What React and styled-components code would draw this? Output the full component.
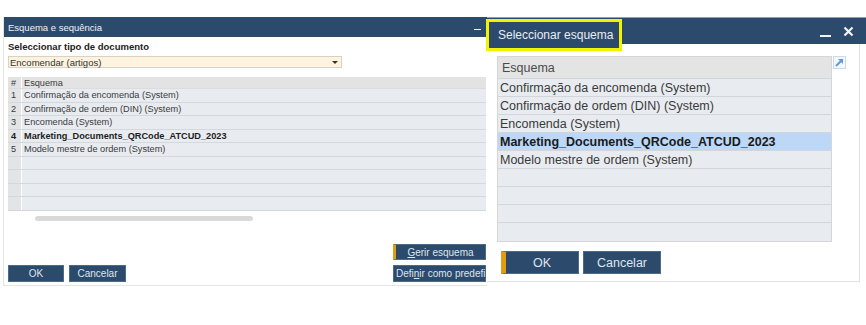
import React from 'react';
import styled, { createGlobalStyle } from 'styled-components';

const GlobalStyle = createGlobalStyle`
  html, body { margin: 0; padding: 0; background: #fff; }
  body { font-family: "Liberation Sans", Arial, sans-serif; color: #333; }
`;

const NAVY = '#2c4a6b';
const ORANGE = '#e39b12';
const NARROW = '"Liberation Sans Narrow", "Liberation Sans", Arial, sans-serif';

const Stage = styled.div`
  display: flex;
  align-items: flex-start;
  width: 866px;
  height: 325px;
  padding: 17px 0 0 3px;
  box-sizing: border-box;
  overflow: hidden;
`;

const MainWindow = styled.div`
  display: flex;
  flex-direction: column;
  width: 484px;
  height: 269px;
  box-sizing: border-box;
  background: #fff;
  border-left: 1px solid #e4e4e4;
  border-bottom: 1px solid #e4e4e4;
`;

const SmallTitle = styled.div`
  display: flex;
  align-items: center;
  justify-content: space-between;
  height: 20px;
  padding: 0 6px 0 4px;
  background: ${NAVY};
  color: #eef2f6;
  font-family: ${NARROW};
  font-size: 9.5px;
`;

const Minimize = styled.span`
  display: inline-block;
  width: ${p => p.$w}px;
  height: ${p => p.$t}px;
  background: #f2f5f8;
  margin-top: ${p => p.$top}px;
`;

const MainBody = styled.div`
  flex: 1;
  display: flex;
  flex-direction: column;
  padding: 3px 1px 3px 4px;
`;

const Label = styled.div`
  font-size: 9.5px;
  font-weight: bold;
  color: #222;
  height: 12px;
  line-height: 12px;
  margin-top: 1px;
`;

const Dropdown = styled.div`
  display: flex;
  align-items: center;
  justify-content: space-between;
  width: 334px;
  height: 12px;
  margin-top: 3px;
  box-sizing: border-box;
  padding: 0 3px 0 1px;
  background: #fdf3de;
  border: 1px solid #d8d2c2;
  font-family: ${NARROW};
  font-size: 9.5px;
  color: #333;
`;

const Caret = styled.span`
  width: 0;
  height: 0;
  border-left: 3px solid transparent;
  border-right: 3px solid transparent;
  border-top: 3px solid #333;
`;

const SmallGrid = styled.div`
  margin-top: 9px;
  display: flex;
  flex-direction: column;
`;

const SmallRow = styled.div`
  display: grid;
  grid-template-columns: 14px 1fr;
  height: ${p => (p.$head ? 12 : 13.5)}px;
  box-sizing: border-box;
  border-bottom: 1px solid ${p => (p.$head ? '#dcdcdc' : '#d3d8dd')};
  font-family: ${p => (p.$bold ? 'inherit' : NARROW)};
  font-size: 9.2px;
  font-weight: ${p => (p.$bold ? 'bold' : 'normal')};
  color: ${p => (p.$bold ? '#1e1e1e' : '#3a3a3a')};
`;

const IndexCell = styled.div`
  display: flex;
  align-items: center;
  padding-left: 3px;
  background: ${p => (p.$head ? '#e3e3e3' : '#e2e4e6')};
  border-right: 1px solid #fff;
`;

const DataCell = styled.div`
  display: flex;
  align-items: center;
  padding-left: 2px;
  background: ${p => (p.$head ? '#e3e3e3' : '#e8ecf0')};
  white-space: nowrap;
`;

const Scrollbar = styled.div`
  width: 218px;
  height: 5px;
  margin: 5px 0 0 27px;
  border-radius: 3px;
  background: #d9d9d9;
`;

const Footer = styled.div`
  margin-top: auto;
  display: flex;
  justify-content: space-between;
  align-items: flex-end;
`;

const ButtonGroup = styled.div`
  display: flex;
  flex-direction: ${p => (p.$column ? 'column' : 'row')};
  gap: ${p => p.$gap}px;
`;

const Button = styled.div`
  display: flex;
  align-items: center;
  justify-content: ${p => (p.$left ? 'flex-start' : 'center')};
  width: ${p => p.$w}px;
  height: ${p => p.$h}px;
  box-sizing: border-box;
  padding-left: ${p => (p.$left ? 2 : 0)}px;
  background: ${NAVY};
  border: 1px solid #4d6a8a;
  border-left: ${p => (p.$accent ? `${p.$accent}px solid ${ORANGE}` : '1px solid #4d6a8a')};
  color: #dfe6ee;
  font-family: ${p => (p.$narrow ? NARROW : 'inherit')};
  font-size: ${p => p.$fs}px;
  white-space: nowrap;
  overflow: hidden;
`;

const U = styled.span`
  text-decoration: underline;
`;

const DialogWindow = styled.div`
  display: flex;
  flex-direction: column;
  width: 379px;
  height: 265px;
  background: #fff;
`;

const BigTitle = styled.div`
  display: flex;
  align-items: flex-start;
  justify-content: space-between;
  height: 26px;
  background: ${NAVY};
  border-top: 1px solid #c99a3a;
`;

const Highlight = styled.div`
  position: relative;
  z-index: 1;
  display: flex;
  align-items: center;
  width: 136px;
  height: 32px;
  margin: 1px 0 0 -1px;
  box-sizing: border-box;
  padding-left: 9px;
  background: ${NAVY};
  border: 3px solid #f3f300;
  color: #e8edf2;
  font-size: 12px;
  white-space: nowrap;
`;

const Controls = styled.div`
  display: flex;
  align-items: center;
  gap: 12px;
  height: 26px;
  padding-right: 12px;
`;

const DialogBody = styled.div`
  flex: 1;
  display: flex;
  flex-direction: column;
  margin-right: 6px;
  padding: 12px 0 0 10px;
  border-right: 1px solid #e2e2e2;
  border-bottom: 1px solid #e2e2e2;
`;

const GridLine = styled.div`
  display: flex;
  align-items: flex-start;
  gap: 1px;
`;

const BigGrid = styled.div`
  width: 335px;
  display: flex;
  flex-direction: column;
  border: 1px solid #d6d6d6;
  box-sizing: border-box;
`;

const BigRow = styled.div`
  display: flex;
  align-items: center;
  height: ${p => (p.$head ? 22 : 18)}px;
  box-sizing: border-box;
  padding-left: ${p => (p.$head ? 4 : 2)}px;
  background: ${p => (p.$head ? '#e4e4e4' : p.$selected ? '#bcd8f6' : '#e8ecf0')};
  border-bottom: 1px solid #d2d6da;
  font-size: 12.5px;
  font-weight: ${p => (p.$bold ? 'bold' : 'normal')};
  color: ${p => (p.$bold ? '#1a1a1a' : p.$head ? '#4a4a4a' : '#3a3a3a')};
  white-space: nowrap;
  &:last-child { border-bottom: none; }
`;

const DialogButtons = styled(ButtonGroup)`
  margin: 9px 0 0 4px;
`;

const ExpandIcon = () => (
  <svg width="13" height="13" viewBox="0 0 13 13">
    <rect x="0.5" y="0.5" width="12" height="12" fill="#f4f8fc" stroke="#c9dbee" />
    <path d="M3 10 L9.5 3.5" stroke="#5d9ad6" strokeWidth="2" />
    <path d="M5 3 H10 V8 Z" fill="#5d9ad6" />
  </svg>
);

const CloseIcon = () => (
  <svg width="11" height="11" viewBox="0 0 11 11">
    <path d="M1.5 1.5 L9.5 9.5 M9.5 1.5 L1.5 9.5" stroke="#f2f5f8" strokeWidth="2.2" />
  </svg>
);

const schemes = [
  'Confirmação da encomenda (System)',
  'Confirmação de ordem (DIN) (System)',
  'Encomenda (System)',
  'Marketing_Documents_QRCode_ATCUD_2023',
  'Modelo mestre de ordem (System)',
];
const BOLD = 3;
const EMPTY = [0, 1, 2, 3];

export default function App() {
  return (
    <>
      <GlobalStyle />
      <Stage>
        <MainWindow>
          <SmallTitle>
            <span>Esquema e sequência</span>
            <Minimize $w={7} $t={1} $top={4} />
          </SmallTitle>
          <MainBody>
            <Label>Seleccionar tipo de documento</Label>
            <Dropdown>
              <span>Encomendar (artigos)</span>
              <Caret />
            </Dropdown>
            <SmallGrid>
              <SmallRow $head>
                <IndexCell $head>#</IndexCell>
                <DataCell $head>Esquema</DataCell>
              </SmallRow>
              {schemes.map((s, i) => (
                <SmallRow key={s} $bold={i === BOLD}>
                  <IndexCell>{i + 1}</IndexCell>
                  <DataCell>{s}</DataCell>
                </SmallRow>
              ))}
              {EMPTY.map(i => (
                <SmallRow key={'e' + i}>
                  <IndexCell />
                  <DataCell />
                </SmallRow>
              ))}
            </SmallGrid>
            <Scrollbar />
            <Footer>
              <ButtonGroup $gap={5}>
                <Button $w={56} $h={17} $fs={10} $narrow>OK</Button>
                <Button $w={57} $h={17} $fs={10} $narrow>Cancelar</Button>
              </ButtonGroup>
              <ButtonGroup $column $gap={5}>
                <Button $w={93} $h={16} $fs={10} $narrow $accent={3}>
                  <U>G</U>erir esquema
                </Button>
                <Button $w={93} $h={17} $fs={10} $narrow $left>
                  Defi<U>n</U>ir como predefinição
                </Button>
              </ButtonGroup>
            </Footer>
          </MainBody>
        </MainWindow>

        <DialogWindow>
          <BigTitle>
            <Highlight>Seleccionar esquema</Highlight>
            <Controls>
              <Minimize $w={11} $t={2} $top={10} />
              <CloseIcon />
            </Controls>
          </BigTitle>
          <DialogBody>
            <GridLine>
              <BigGrid>
                <BigRow $head>Esquema</BigRow>
                {schemes.map((s, i) => (
                  <BigRow key={s} $bold={i === BOLD} $selected={i === BOLD}>
                    {s}
                  </BigRow>
                ))}
                {EMPTY.map(i => (
                  <BigRow key={'e' + i} />
                ))}
              </BigGrid>
              <ExpandIcon />
            </GridLine>
            <DialogButtons $gap={4}>
              <Button $w={78} $h={23} $fs={12.5} $accent={5}>OK</Button>
              <Button $w={78} $h={23} $fs={12.5}>Cancelar</Button>
            </DialogButtons>
          </DialogBody>
        </DialogWindow>
      </Stage>
    </>
  );
}
